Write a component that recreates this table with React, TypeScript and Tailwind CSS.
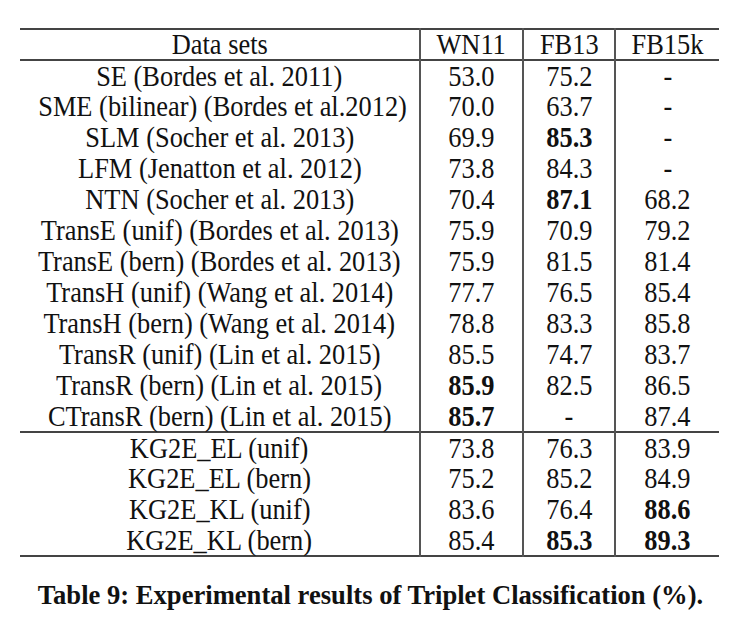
type Row = { name: string; cells: [string, string, string]; bold?: [boolean, boolean, boolean] }

const baselines: Row[] = [
  { name: 'SE (Bordes et al. 2011)', cells: ['53.0', '75.2', '-'] },
  { name: 'SME (bilinear) (Bordes et al.2012)', cells: ['70.0', '63.7', '-'] },
  { name: 'SLM (Socher et al. 2013)', cells: ['69.9', '85.3', '-'], bold: [false, true, false] },
  { name: 'LFM (Jenatton et al. 2012)', cells: ['73.8', '84.3', '-'] },
  { name: 'NTN (Socher et al. 2013)', cells: ['70.4', '87.1', '68.2'], bold: [false, true, false] },
  { name: 'TransE (unif) (Bordes et al. 2013)', cells: ['75.9', '70.9', '79.2'] },
  { name: 'TransE (bern) (Bordes et al. 2013)', cells: ['75.9', '81.5', '81.4'] },
  { name: 'TransH (unif) (Wang et al. 2014)', cells: ['77.7', '76.5', '85.4'] },
  { name: 'TransH (bern) (Wang et al. 2014)', cells: ['78.8', '83.3', '85.8'] },
  { name: 'TransR (unif) (Lin et al. 2015)', cells: ['85.5', '74.7', '83.7'] },
  { name: 'TransR (bern) (Lin et al. 2015)', cells: ['85.9', '82.5', '86.5'], bold: [true, false, false] },
  { name: 'CTransR (bern) (Lin et al. 2015)', cells: ['85.7', '-', '87.4'], bold: [true, false, false] },
]

const ours: Row[] = [
  { name: 'KG2E_EL (unif)', cells: ['73.8', '76.3', '83.9'] },
  { name: 'KG2E_EL (bern)', cells: ['75.2', '85.2', '84.9'] },
  { name: 'KG2E_KL (unif)', cells: ['83.6', '76.4', '88.6'], bold: [false, false, true] },
  { name: 'KG2E_KL (bern)', cells: ['85.4', '85.3', '89.3'], bold: [false, true, true] },
]

const cell = "h-[31px] p-0 text-center font-['Liberation_Serif'] text-[29px] leading-none whitespace-nowrap"

function Txt({ children }: { children: React.ReactNode }) {
  return <span className="inline-block scale-x-[0.91]">{children}</span>
}

function TableRow({ row, first }: { row: Row; first?: boolean }) {
  return (
    <tr className={first ? 'border-t-2 border-[#444]' : ''}>
      <td className={cell}>
        <Txt>{row.name}</Txt>
      </td>
      {row.cells.map((c, i) => (
        <td key={i} className={`${cell} border-l-2 border-[#555] ${row.bold?.[i] ? 'font-bold' : 'font-normal'}`}>
          <Txt>{c}</Txt>
        </td>
      ))}
    </tr>
  )
}

export default function App() {
  return (
    <div className="w-[741px] h-[629px] bg-white text-[#111] pt-[28px] font-['Liberation_Serif'] overflow-hidden">
      <table className="ml-[20px] w-[699px] border-collapse table-fixed font-['Liberation_Serif']">
        <colgroup>
          <col className="w-[400px]" />
          <col className="w-[103px]" />
          <col className="w-[92px]" />
          <col className="w-[104px]" />
        </colgroup>
        <thead>
          <tr className="border-t-2 border-b-2 border-[#444]">
            <th className={`${cell} font-normal`}>
              <Txt>Data sets</Txt>
            </th>
            <th className={`${cell} font-normal border-l-2 border-[#555]`}>
              <Txt>WN11</Txt>
            </th>
            <th className={`${cell} font-normal border-l-2 border-[#555]`}>
              <Txt>FB13</Txt>
            </th>
            <th className={`${cell} font-normal border-l-2 border-[#555]`}>
              <Txt>FB15k</Txt>
            </th>
          </tr>
        </thead>
        <tbody>
          {baselines.map((r) => (
            <TableRow key={r.name} row={r} />
          ))}
          {ours.map((r, i) => (
            <TableRow key={r.name} row={r} first={i === 0} />
          ))}
          <tr className="border-t-2 border-[#444]">
            <td colSpan={4} className="p-0 h-0" />
          </tr>
        </tbody>
      </table>
      <p className="mt-[24px] text-center text-[28px] leading-none font-bold scale-x-[0.95] whitespace-nowrap font-['Liberation_Serif']">
        Table 9: Experimental results of Triplet Classification (%).
      </p>
    </div>
  )
}
